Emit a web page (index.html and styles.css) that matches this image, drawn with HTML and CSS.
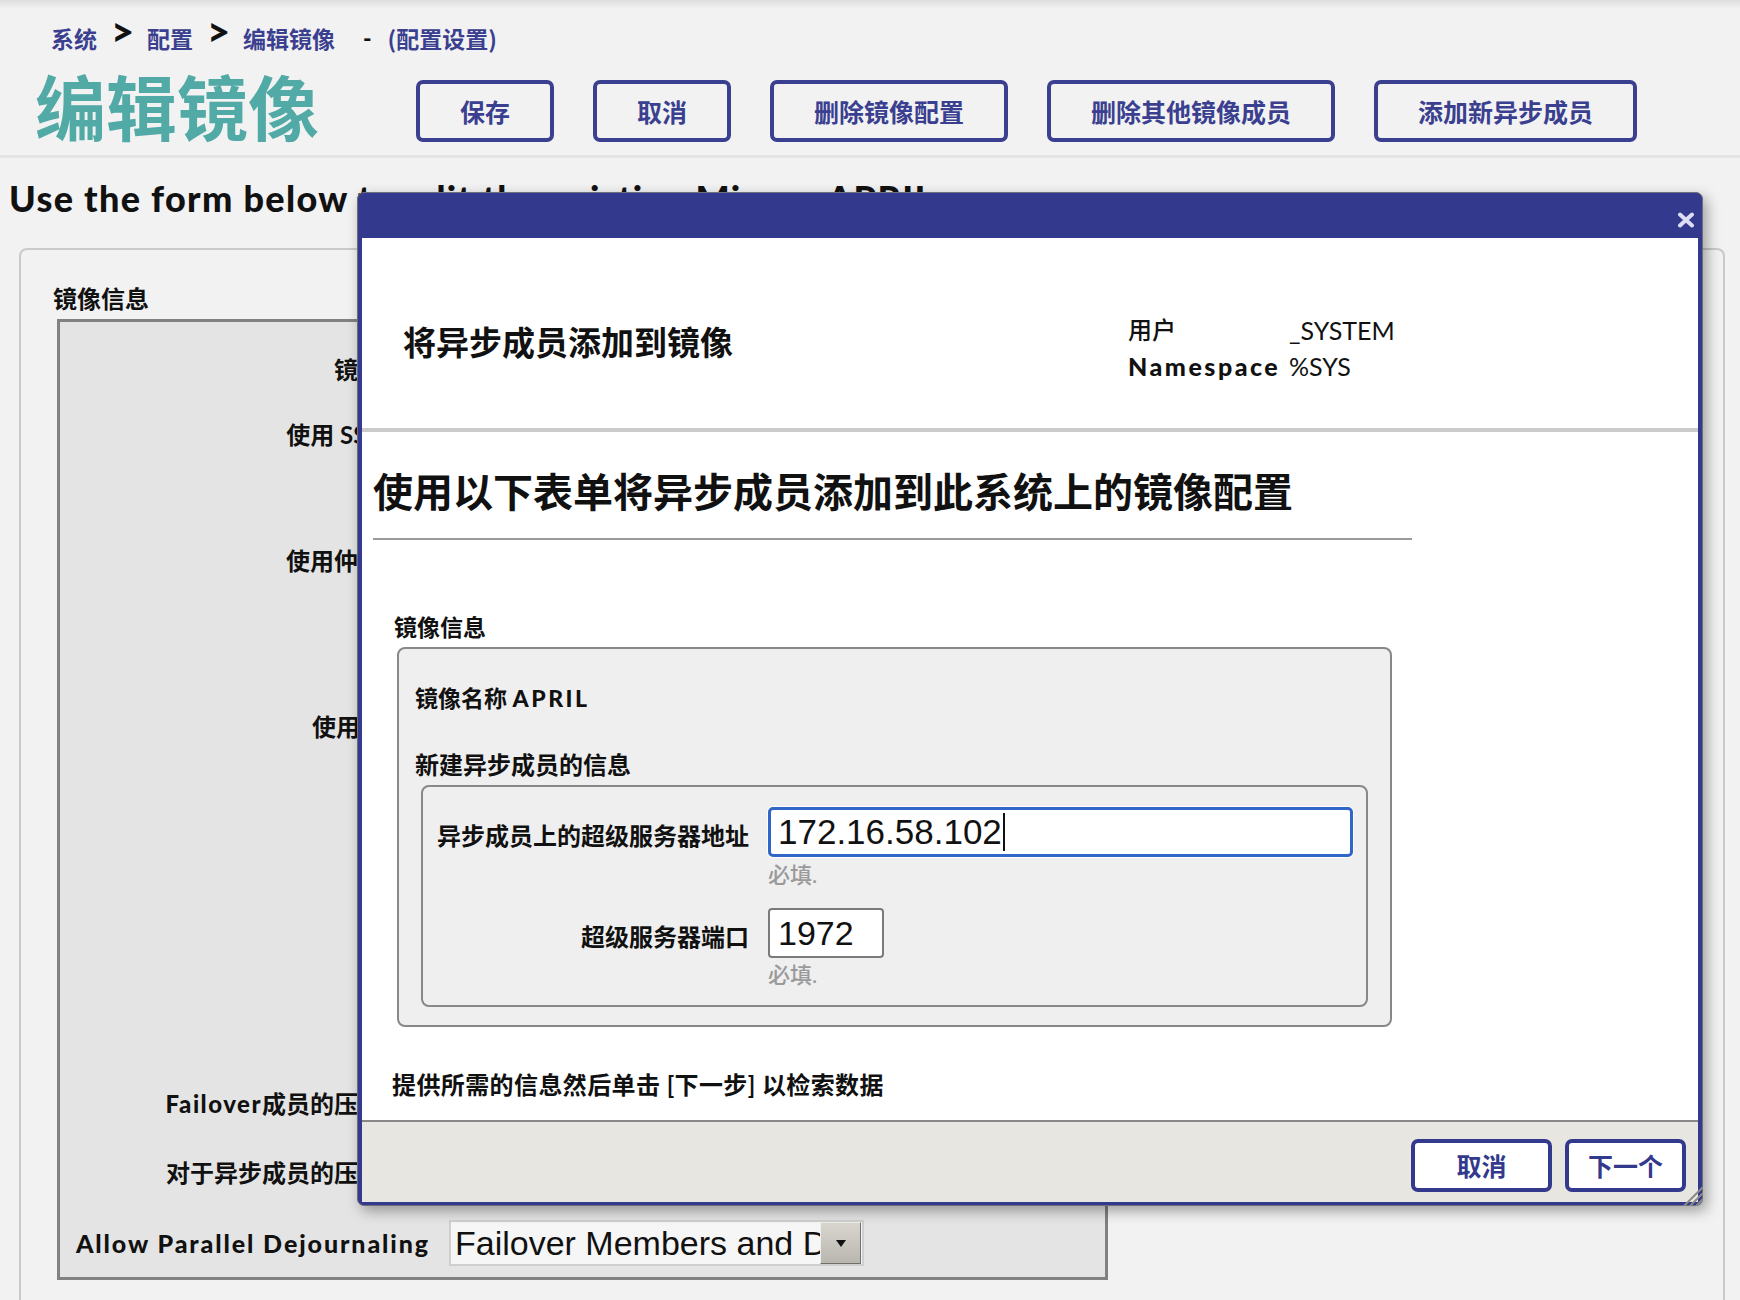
FILE: index.html
```html
<!DOCTYPE html>
<html lang="zh-CN">
<head>
<meta charset="utf-8">
<title>编辑镜像</title>
<link rel="stylesheet" href="styles.css">
</head>
<body>
<header class="topbar">
  <nav class="crumbs">
    <span class="crumb">系统</span><span class="sep">&gt;</span><span class="crumb">配置</span><span class="sep">&gt;</span><span class="crumb">编辑镜像</span><span class="dash">-</span><span class="crumb">(配置设置)</span>
  </nav>
  <div class="title-row">
    <h1 class="title">编辑镜像</h1>
    <div class="actions">
      <button class="btn">保存</button>
      <button class="btn">取消</button>
      <button class="btn">删除镜像配置</button>
      <button class="btn">删除其他镜像成员</button>
      <button class="btn">添加新异步成员</button>
    </div>
  </div>
</header>

<p class="intro">Use the form below to edit the existing Mirror: APRIL</p>

<section class="panel">
  <div class="panel-label">镜像信息</div>
  <div class="mirror-box">
    <div class="frow r1"><div class="flabel">镜像名称</div></div>
    <div class="frow r2"><div class="flabel">使用 SSL/TLS</div></div>
    <div class="frow r3"><div class="flabel">使用仲裁器？</div></div>
    <div class="frow r4"><div class="flabel">使用虚拟IP</div></div>
    <div class="r-gap"></div>
    <div class="frow r5"><div class="flabel"><span class="latin">Failover</span>成员的压缩模式</div></div>
    <div class="frow r6"><div class="flabel">对于异步成员的压缩模式</div></div>
    <div class="frow r7">
      <div class="flabel"><span class="latin latin-lg">Allow Parallel Dejournaling</span></div>
      <div class="select">
        <span class="select-text">Failover Members and DR</span>
        <span class="select-arrow"><svg width="12" height="9" viewBox="0 0 12 9"><path d="M1 1 L11 1 L6 8 Z" fill="#111"/></svg></span>
      </div>
    </div>
  </div>
</section>

<div class="modal">
  <div class="modal-bar">
    <svg class="modal-close" width="18" height="16" viewBox="0 0 18 16"><path d="M3 2.5 L15 13.5 M15 2.5 L3 13.5" stroke="#dcdcf2" stroke-width="4" stroke-linecap="round"/></svg>
  </div>
  <div class="modal-head">
    <div class="mh-title">将异步成员添加到镜像</div>
    <div class="mh-info">
      <span class="mh-key">用户</span><span class="mh-val">_SYSTEM</span>
      <span class="mh-key mh-bold">Namespace</span><span class="mh-val">%SYS</span>
    </div>
  </div>
  <div class="modal-body">
    <h2 class="mb-heading">使用以下表单将异步成员添加到此系统上的镜像配置</h2>
    <div class="mb-rule"></div>
    <div class="mb-legend">镜像信息</div>
    <div class="mb-box">
      <div class="mb-name">镜像名称 <span class="latin-b">APRIL</span></div>
      <div class="mb-sub">新建异步成员的信息</div>
      <div class="mb-inner">
        <div class="irow">
          <div class="ilabel">异步成员上的超级服务器地址</div>
          <div class="inp inp-focus">172.16.58.102<span class="caret"></span></div>
        </div>
        <div class="req">必填.</div>
        <div class="irow irow-2">
          <div class="ilabel">超级服务器端口</div>
          <div class="inp inp-port">1972</div>
        </div>
        <div class="req req-2">必填.</div>
      </div>
    </div>
    <div class="mb-note">提供所需的信息然后单击 [下一步] 以检索数据</div>
  </div>
  <div class="modal-foot">
    <button class="fbtn fbtn-cancel">取消</button>
    <button class="fbtn fbtn-next">下一个</button>
  </div>
  <svg class="grip" width="26" height="24" viewBox="0 0 26 24"><path d="M7 24 L26 5 M13 24 L26 11 M19 24 L26 17" stroke="#8a8a8a" stroke-width="2"/></svg>
</div>
</body>
</html>
```
FILE: styles.css
```css
body {
  margin: 0;
  background: #f2f2f2;
  font-family: "Lato", "Noto Sans CJK SC", sans-serif;
  color: #111;
}

/* ---------- header ---------- */
.topbar {
  height: 158px;
  box-sizing: border-box;
  border-bottom: 3px solid #e4e4e4;
  background: linear-gradient(#dedede, #f2f2f2 9px);
}
.crumbs {
  display: flex;
  align-items: flex-start;
  height: 30px;
  padding: 23px 0 0 51px;
  font-family: "Noto Sans CJK SC", sans-serif;
  font-weight: 700;
  font-size: 23px;
  line-height: 30px;
  color: #3b3f8f;
}
.sep {
  font-family: "Lato", sans-serif;
  font-weight: 900;
  font-size: 40px;
  line-height: 30px;
  color: #111;
  width: 22px;
  margin: 0 14px;
  text-align: center;
  position: relative;
  top: -7px;
}
.dash {
  font-family: "Lato", sans-serif;
  font-weight: 900;
  color: #111;
  margin: 0 16px 0 28px;
}
.title-row {
  display: flex;
  align-items: flex-start;
  margin-top: 18px;
  padding-left: 35px;
}
.title {
  margin: 0;
  flex: none;
  width: 381px;
  font-family: "Noto Sans CJK SC", sans-serif;
  font-weight: 700;
  font-size: 71px;
  line-height: 66px;
  color: #52aaa6;
}
.actions {
  display: flex;
  gap: 39px;
  margin-top: 9px;
}
.btn {
  height: 62px;
  box-sizing: border-box;
  padding: 0 40px;
  border: 4px solid #3a3f90;
  border-radius: 7px;
  background: transparent;
  font-family: "Noto Sans CJK SC", sans-serif;
  font-weight: 700;
  font-size: 25px;
  line-height: 1;
  color: #3a3f90;
}

/* ---------- intro + panel ---------- */
.intro {
  margin: 20px 0 0 9px;
  font-weight: 900;
  font-size: 36px;
  letter-spacing: 1.3px;
  line-height: 40px;
  color: #111;
}
.panel {
  margin: 30px 15px 0 19px;
  height: 1100px;
  border: 2px solid #cacaca;
  border-bottom: none;
  border-radius: 8px 8px 0 0;
  padding: 33px 0 0 36px;
}
.panel-label {
  margin: 0 0 6px -4px;
  font-family: "Noto Sans CJK SC", sans-serif;
  font-weight: 700;
  font-size: 24px;
  line-height: 30px;
}
.mirror-box {
  width: 1051px;
  height: 961px;
  box-sizing: border-box;
  border: 3px solid #818181;
  background: #e4e4e4;
  padding-top: 18px;
}
.frow {
  display: flex;
  align-items: center;
}
.r1 { height: 60px; }
.r2 { height: 70px; }
.r3 { height: 182px; }
.r4 { height: 150px; }
.r-gap { height: 272px; }
.r5 { height: 60px; }
.r6 { height: 78px; }
.r7 { height: 62px; }
.flabel {
  flex: none;
  width: 370px;
  text-align: right;
  font-weight: 700;
  font-size: 24px;
  line-height: 30px;
  white-space: nowrap;
}
.latin {
  font-weight: 900;
  letter-spacing: 1.5px;
}
.latin-lg {
  font-size: 25px;
  letter-spacing: 1.9px;
}
.select {
  margin-left: 19px;
  width: 415px;
  height: 46px;
  box-sizing: border-box;
  border: 2px solid #cfcfcf;
  background: #f6f6f6;
  display: flex;
  align-items: center;
  overflow: hidden;
}
.select-text {
  flex: 1;
  overflow: hidden;
  white-space: nowrap;
  padding-left: 4px;
  font-family: "Liberation Sans", sans-serif;
  font-size: 34px;
  line-height: 42px;
  color: #111;
}
.select-arrow {
  flex: none;
  width: 39px;
  height: 40px;
  margin-right: 1px;
  border: 1px solid;
  border-color: #f0f0ea #6f6f6a #6f6f6a #f0f0ea;
  background: linear-gradient(#d8d6ce, #b8b6ae);
  display: flex;
  align-items: center;
  justify-content: center;
}

/* ---------- modal ---------- */
.modal {
  position: absolute;
  left: 357px;
  top: 192px;
  width: 1346px;
  height: 1014px;
  box-sizing: border-box;
  border: 1px solid #6d6d7d;
  border-radius: 7px;
  background: #33398c;
  padding: 0 4px 3px 4px;
  display: flex;
  flex-direction: column;
  box-shadow: 4px 5px 14px rgba(0, 0, 0, 0.35);
}
.modal-bar {
  flex: none;
  height: 45px;
  position: relative;
}
.modal-close {
  position: absolute;
  right: 3px;
  top: 19px;
}
.modal-head {
  flex: none;
  height: 194px;
  box-sizing: border-box;
  padding: 22px 0 0 41px;
  border-bottom: 4px solid #cbcbcb;
  background: #fff;
  display: flex;
  align-items: center;
}
.mh-title {
  flex: none;
  width: 725px;
  margin-bottom: 6px;
  font-family: "Noto Sans CJK SC", sans-serif;
  font-weight: 700;
  font-size: 33px;
  line-height: 40px;
}
.mh-info {
  margin-top: 8px;
  display: grid;
  grid-template-columns: 161px auto;
  font-size: 25px;
  line-height: 36px;
}
.mh-key {
  font-weight: 500;
  font-size: 24px;
}
.mh-bold {
  font-weight: 900;
  font-size: 25px;
  letter-spacing: 2.5px;
}
.modal-body {
  flex: 1;
  background: #fff;
  padding: 33px 0 0 11px;
}
.mb-heading {
  margin: 0;
  font-family: "Noto Sans CJK SC", sans-serif;
  font-weight: 700;
  font-size: 40px;
  line-height: 50px;
}
.mb-rule {
  width: 1039px;
  height: 2px;
  margin-top: 23px;
  background: #9a9a9a;
}
.mb-legend {
  margin: 72px 0 0 21px;
  font-weight: 700;
  font-size: 23px;
  line-height: 30px;
}
.mb-box {
  margin: 5px 0 0 24px;
  width: 995px;
  box-sizing: border-box;
  border: 2px solid #888;
  border-radius: 8px;
  background: #efefef;
  padding: 34px 0 18px 16px;
}
.mb-name {
  font-weight: 700;
  font-size: 23px;
  line-height: 30px;
}
.latin-b {
  font-weight: 900;
  letter-spacing: 2.5px;
}
.mb-sub {
  margin-top: 37px;
  font-weight: 700;
  font-size: 24px;
  line-height: 30px;
}
.mb-inner {
  margin: 5px 0 0 6px;
  width: 947px;
  box-sizing: border-box;
  border: 2px solid #888;
  border-radius: 8px;
  padding: 20px 0 17px 0;
}
.irow {
  display: flex;
  align-items: center;
}
.irow-2 { margin-top: 20px; }
.ilabel {
  flex: none;
  width: 326px;
  padding-top: 8px;
  text-align: right;
  font-weight: 700;
  font-size: 24px;
  line-height: 30px;
}
.inp {
  margin-left: 19px;
  height: 50px;
  box-sizing: border-box;
  background: #fff;
  display: flex;
  align-items: center;
  font-family: "Liberation Sans", sans-serif;
  color: #111;
  white-space: nowrap;
}
.inp-focus {
  width: 585px;
  border: 3px solid #2f66c8;
  border-radius: 5px;
  padding-left: 7px;
  font-size: 35px;
  box-shadow: 0 0 0 1px #ffffff;
}
.caret {
  display: inline-block;
  width: 2px;
  height: 38px;
  margin-left: 1px;
  background: #111;
}
.inp-port {
  width: 116px;
  border: 2px solid #7a7a7a;
  border-radius: 4px;
  padding-left: 8px;
  font-size: 34px;
}
.req {
  margin: 5px 0 0 345px;
  color: #9a9a9a;
  font-weight: 500;
  font-size: 22px;
  line-height: 26px;
}
.req-2 { margin-top: 4px; }
.mb-note {
  margin: 43px 0 0 19px;
  font-weight: 700;
  font-size: 24px;
  letter-spacing: 0.4px;
  line-height: 30px;
}
.modal-foot {
  flex: none;
  height: 82px;
  box-sizing: border-box;
  border-top: 2px solid #888;
  background: #e8e6e1;
  display: flex;
  justify-content: flex-end;
  align-items: flex-start;
  gap: 13px;
  padding: 17px 12px 0 0;
}
.fbtn {
  height: 53px;
  box-sizing: border-box;
  border: 4px solid #33398c;
  border-radius: 7px;
  background: #fff;
  font-family: "Noto Sans CJK SC", sans-serif;
  font-weight: 700;
  font-size: 25px;
  line-height: 1;
  color: #33398c;
  padding: 0;
}
.fbtn-cancel { width: 141px; }
.fbtn-next { width: 121px; }
.grip {
  position: absolute;
  right: -1px;
  bottom: -1px;
}
```
